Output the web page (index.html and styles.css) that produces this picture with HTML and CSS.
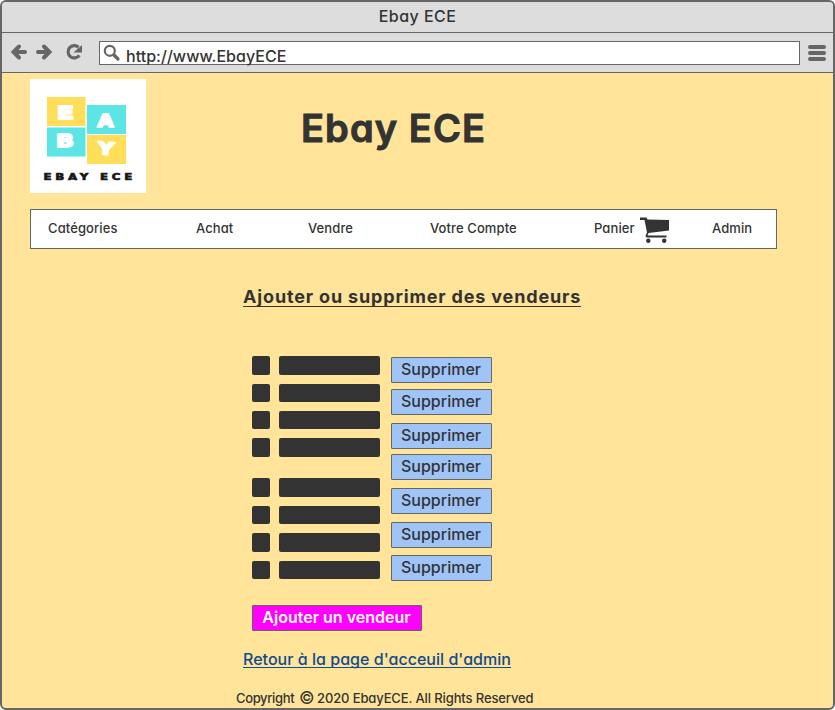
FILE: index.html
```html
<!DOCTYPE html>
<html lang="fr">
<head>
<meta charset="utf-8">
<title>Ebay ECE</title>
<link rel="stylesheet" href="styles.css">
</head>
<body>
<div class="window">
  <div class="titlebar"><span>Ebay ECE</span></div>
  <div class="toolbar">
    <svg class="nav-icons" width="80" height="20" viewBox="0 0 80 20" fill="none" stroke="#666" stroke-width="4">
      <path d="M6.500 10H18M12 4.500L6.500 10L12 15.500M31 10H42.500M37 4.500L42.500 10L37 15.500" stroke-linecap="round"/>
      <path d="M71.500 5.200A6.200 6.200 0 1 0 72.400 13.300" stroke-width="3.200"/>
      <path d="M75 3V10.500H66.500Z" fill="#666" stroke="none"/>
    </svg>
    <div class="address">
      <svg width="18" height="18" viewBox="0 0 18 18" fill="none" stroke="#666">
        <circle cx="6.800" cy="6.800" r="5" stroke-width="2.200"/>
        <path d="M11 11L15 15" stroke-width="3.200" stroke-linecap="round"/>
      </svg>
      <span>http://www.EbayECE</span>
    </div>
    <div class="burger"><i></i><i></i><i></i></div>
  </div>
  <header class="banner">
    <svg class="logo" width="116" height="114" viewBox="0 0 116 114">
      <rect width="116" height="114" fill="#fff"/>
      <path d="M17 18h38.500v29H17zM57 56h39v29H57z" fill="#ffdf59"/>
      <path d="M57 26h39v29H57zM17 48.500h38.500v29H17z" fill="#5ce5e5"/>
      <g class="tile-letters">
        <text x="27" y="39.500" textLength="17" lengthAdjust="spacingAndGlyphs">E</text>
        <text x="67.500" y="48" textLength="16" lengthAdjust="spacingAndGlyphs">A</text>
        <text x="26" y="68" textLength="18" lengthAdjust="spacingAndGlyphs">B</text>
        <text x="68" y="75.500" textLength="16" lengthAdjust="spacingAndGlyphs" transform="rotate(5 76 70)">Y</text>
      </g>
      <text class="logo-name" transform="translate(13.500 100.500) scale(1.250 1)" textLength="71">EBAY ECE</text>
    </svg>
    <h1>Ebay ECE</h1>
  </header>
  <nav class="menu">
    <a>Catégories</a>
    <a>Achat</a>
    <a>Vendre</a>
    <a>Votre Compte</a>
    <a class="cart">Panier
      <svg width="31" height="27" viewBox="0 0 31 27" fill="#333">
        <path d="M1 0.500H7.500L8.500 2.500L30 3V13.500L9.500 16L8.500 18.500H27.500V20.500H7.500L6.500 19L8 15.500L5.500 3H1Z"/>
        <circle cx="9.300" cy="23.800" r="2.200"/><circle cx="25.200" cy="23.800" r="2.200"/>
      </svg>
    </a>
    <a>Admin</a>
  </nav>
  <main>
    <h2><span>Ajouter ou supprimer des vendeurs</span></h2>
    <div class="sellers">
      <div class="lists">
        <ul><li><i></i><b></b></li><li><i></i><b></b></li><li><i></i><b></b></li><li><i></i><b></b></li></ul>
        <ul><li><i></i><b></b></li><li><i></i><b></b></li><li><i></i><b></b></li><li><i></i><b></b></li></ul>
      </div>
      <div class="actions">
        <button>Supprimer</button>
        <button>Supprimer</button>
        <button class="wide-gap">Supprimer</button>
        <button class="tight-gap">Supprimer</button>
        <button class="wide-gap">Supprimer</button>
        <button class="wide-gap">Supprimer</button>
        <button class="last">Supprimer</button>
      </div>
    </div>
    <button class="add">Ajouter un vendeur</button>
    <a class="back"><span>Retour à la page d'acceuil d'admin</span></a>
  </main>
  <footer><span class="copy">Copyright</span><span class="sign">©</span><span class="rights">2020 EbayECE. All Rights Reserved</span></footer>
</div>
</body>
</html>
```
FILE: styles.css
```css
* { box-sizing: border-box; }

body {
  margin: 0;
  background: #fff;
  color: #333;
  font-family: Inter, "Liberation Sans", sans-serif;
  font-feature-settings: "cv11";
}

.window {
  width: 835px;
  height: 710px;
  border: 2px solid #666;
  border-radius: 6px;
  background: #ffe499;
  overflow: hidden;
}

.titlebar {
  height: 31px;
  background: #ddd;
  border-bottom: 1px solid #666;
  text-align: center;
  font-size: 16px;
  font-weight: 500;
  line-height: 29px;
  letter-spacing: 0.450px;
}

.toolbar {
  display: flex;
  height: 40px;
  padding: 8px 7px 0 5px;
  background: #ddd;
  border-bottom: 1px solid #666;
}

.nav-icons { margin-top: 1px; }

.address {
  display: flex;
  width: 701px;
  height: 24px;
  margin-left: 12px;
  padding: 2px 3px;
  background: #fff;
  border: 1px solid #666;
  font-size: 16px;
  font-weight: 500;
  line-height: 25px;
}

.address span { margin-left: 5px; letter-spacing: 0.030px; }

.burger { width: 18px; margin: 4px 0 0 8px; }
.burger i { display: block; height: 4px; margin-bottom: 2px; border-radius: 2px; background: #666; }

.banner { display: flex; height: 136px; padding: 6px 0 0 28px; }

.logo { flex: none; }
.tile-letters { fill: #fff; font: bold 17px "DejaVu Sans", sans-serif; stroke: #fff; stroke-width: 1.800px; stroke-linejoin: round; }
.logo-name { fill: #181818; font: bold 9.500px "DejaVu Sans", sans-serif; stroke: #181818; stroke-width: 0.700px; stroke-linejoin: round; }

h1 {
  margin: 25px 0 0 155px;
  font-size: 38px;
  font-weight: 600;
  line-height: 48px;
  letter-spacing: 1.100px;
  -webkit-text-stroke: 1px #333;
  stroke-linejoin: round;
}

.menu {
  display: grid;
  grid-template-columns: 148px 112px 122px 164px 118px 1fr;
  width: 747px;
  height: 40px;
  margin-left: 28px;
  padding-left: 17px;
  background: #fff;
  border: 1px solid #666;
  font-size: 13px;
  font-weight: 500;
  line-height: 37px;
  letter-spacing: 0.100px;
}

.cart { display: flex; }
.cart svg { margin: 7px 0 0 4px; }

main { padding-left: 241px; }

h2 { margin: 36px 0 0; height: 71px; font-size: 18px; line-height: 24px; letter-spacing: 0.840px; }
h2 span { display: inline-block; height: 22px; border-bottom: 1px solid #333; }

.sellers { display: flex; height: 249px; padding-left: 9px; }
.lists { width: 128px; margin-right: 11px; padding-top: 0.300px; }

ul { margin: 0 0 21.500px; padding: 0; list-style: none; }
li { display: flex; gap: 9px; margin-bottom: 9px; }
li:last-child { margin-bottom: 0; }
li i, li b { height: 18.400px; border-radius: 2px; background: #333; }
li i { width: 18px; }
li b { width: 101px; }

button {
  display: block;
  width: 101px;
  height: 26px;
  margin: 6px 0 0;
  padding: 0 1px 2px 0;
  border: 1px solid #666;
  border-radius: 1px;
  background: #9fc4f8;
  color: #333;
  font: 500 16px/22px Inter, "Liberation Sans", sans-serif;
  font-feature-settings: "cv11";
}
.actions button:first-child { margin-top: 1px; }
.wide-gap { margin-top: 8px; }
.tight-gap { margin-top: 5px; }
.last { margin-top: 7px; }

.add { width: 170px; margin: 0 0 0 9px; background: #f0f; color: #fff; font-weight: 600; }

.back { display: block; margin-top: 17px; height: 41px; color: #114b8f; font-size: 16px; line-height: 22px; font-weight: 500; letter-spacing: 0.030px; }
.back span { display: inline-block; height: 20px; border-bottom: 1px solid #114b8f; }

footer { display: flex; padding-left: 234px; font-size: 13px; line-height: 18px; font-weight: 500; letter-spacing: -0.120px; }
.copy { width: 58px; letter-spacing: -0.350px; }
.sign { margin-left: 5px; width: 18px; font-size: 17px; font-weight: 400; }
```
